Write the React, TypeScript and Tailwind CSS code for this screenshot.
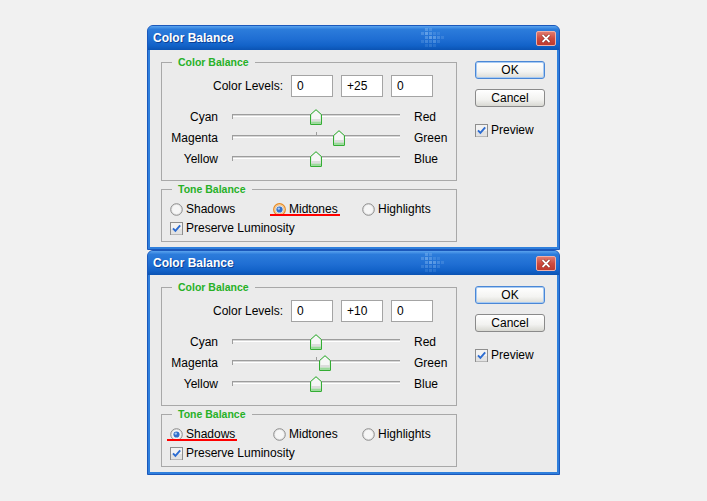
import React from 'react';

type Tone = 'shadows' | 'midtones' | 'highlights';

interface DialogProps {
  levels: [number, number, number];
  tone: Tone;
  hoverTone?: boolean;
}

const sliders = [
  { left: 'Cyan', right: 'Red' },
  { left: 'Magenta', right: 'Green' },
  { left: 'Yellow', right: 'Blue' },
];

const tones: { id: Tone; label: string; width: string }[] = [
  { id: 'shadows', label: 'Shadows', width: 'w-[103px]' },
  { id: 'midtones', label: 'Midtones', width: 'w-[89px]' },
  { id: 'highlights', label: 'Highlights', width: 'w-[90px]' },
];

const fmt = (v: number) => (v > 0 ? `+${v}` : `${v}`);

function Thumb() {
  return (
    <svg width="12" height="16" viewBox="0 0 12 16">
      <path d="M6 0.7 L11.4 5.6 V15.4 H0.6 V5.6 Z" fill="#f6f6f6" stroke="#1ea51e" />
      <rect x="1.1" y="10" width="9.8" height="2.6" fill="#dcdcdc" />
      <rect x="1.1" y="12.6" width="9.8" height="2.3" fill="#9ad99a" />
    </svg>
  );
}

function Radio({ checked, hover }: { checked: boolean; hover?: boolean }) {
  return (
    <svg width="13" height="13" viewBox="0 0 13 13">
      <circle cx="6.5" cy="6.5" r="5.8" fill="#e6e6e6" stroke={hover ? '#ea8a1f' : '#8e8e8e'} strokeWidth={hover ? 1.3 : 1} />
      {hover && <circle cx="6.5" cy="6.5" r="4.6" fill="none" stroke="#f7bd74" strokeWidth="1" />}
      {!hover && <circle cx="6.5" cy="6.5" r="4.4" fill="#f6f6f6" />}
      {checked && (
        <>
          <circle cx="6.5" cy="6.5" r="3.1" fill="#3270cc" />
          <circle cx="5.8" cy="5.6" r="1.2" fill="#a9c9f2" />
        </>
      )}
    </svg>
  );
}

function Check() {
  return (
    <svg width="13" height="13" viewBox="0 0 13 13">
      <rect x="0.5" y="0.5" width="12" height="12" fill="#f2f2f2" stroke="#8e8e8e" />
      <rect x="1" y="7" width="11" height="5.5" fill="#e2e2e2" />
      <path d="M3 6.3 L5.4 8.8 L10.2 3.4" fill="none" stroke="#2b6bd1" strokeWidth="1.9" />
    </svg>
  );
}

function Pattern() {
  const cells: [number, number, number][] = [
    [4, 0, 0.35], [8, 0, 0.25],
    [0, 4, 0.3], [4, 4, 0.5], [8, 4, 0.35], [12, 4, 0.2], [16, 4, 0.15],
    [4, 8, 0.35], [8, 8, 0.5], [12, 8, 0.45], [16, 8, 0.3], [20, 8, 0.2],
    [0, 12, 0.2], [4, 12, 0.3], [8, 12, 0.25], [12, 12, 0.35], [16, 12, 0.2],
    [4, 16, 0.15], [8, 16, 0.2], [12, 16, 0.15],
  ];
  return (
    <svg width="24" height="19" viewBox="0 0 24 19" className="absolute left-[273px] top-[2px]">
      {cells.map(([x, y, o], i) => (
        <rect key={i} x={x} y={y} width="3" height="3" fill="#9cc8f5" opacity={o} />
      ))}
    </svg>
  );
}

function Dialog({ levels, tone, hoverTone }: DialogProps) {
  return (
    <div className="w-[413px] h-[225px] flex flex-col rounded-t-[6px] border border-[#1b58bb] bg-[#2f7fdc]">
      <div className="relative h-[24px] flex items-center pl-[5px] pr-[3px] rounded-t-[5px] bg-[linear-gradient(180deg,#5aa3ee_0%,#2c7cdb_14%,#1f6ed3_55%,#1262c8_82%,#0b53b3_100%)]">
        <span className="text-white font-bold text-[12px] [text-shadow:1px_1px_0_#0b3f94]">Color Balance</span>
        <Pattern />
        <div className="ml-auto w-[20px] h-[15px] flex items-center justify-center rounded-[2px] border border-[#f0b0a8] bg-[linear-gradient(180deg,#e07a6e_0%,#cf4b3f_50%,#bd3a30_100%)]">
          <svg width="10" height="9" viewBox="0 0 10 9">
            <path d="M1.5 1 L8.5 8 M8.5 1 L1.5 8" stroke="#7a1c14" strokeWidth="3" />
            <path d="M1.5 1 L8.5 8 M8.5 1 L1.5 8" stroke="#ffffff" strokeWidth="1.8" />
          </svg>
        </div>
      </div>

      <div className="flex-1 mx-[2px] mb-[2px] bg-[#ebebeb] flex pl-[11px] pt-[12px] text-[12px] text-black">
        <div className="flex flex-col gap-[8px]">
          {/* Color Balance group */}
          <div className="relative w-[296px] h-[119px] border border-[#a8a8a8]">
            <span className="absolute left-[10px] -top-[7px] px-[6px] bg-[#ebebeb] leading-[12px] text-[10.5px] font-bold text-[#27b127]">Color Balance</span>
            <div className="flex items-center pt-[12px]">
              <span className="w-[121px] text-right">Color Levels:</span>
              <div className="flex gap-[8px] ml-[8px]">
                {levels.map((v, i) => (
                  <div key={i} className="w-[42px] h-[22px] border border-[#a4a4a4] bg-white pl-[5px] flex items-center">{fmt(v)}</div>
                ))}
              </div>
            </div>
            <div className="flex flex-col mt-[9px]">
              {sliders.map((s, i) => (
                <div key={s.left} className="h-[21px] flex items-center">
                  <span className="w-[56px] text-right">{s.left}</span>
                  <div className="relative ml-[14px] w-[168px] h-full">
                    <div className="absolute left-0 right-0 top-[8px] h-[3px] border-t border-[#9d9d9d] bg-[#d6d6d6] border-b border-b-white" />
                    <div className="absolute left-0 top-[8px] w-px h-[5px] bg-[#9d9d9d]" />
                    <div className="absolute left-[84px] top-[5px] w-px h-[4px] bg-[#9d9d9d]" />
                    <div className="absolute top-[3px]" style={{ left: 78 + levels[i] * 0.9 }}>
                      <Thumb />
                    </div>
                  </div>
                  <span className="ml-[14px]">{s.right}</span>
                </div>
              ))}
            </div>
          </div>

          {/* Tone Balance group */}
          <div className="relative w-[296px] h-[53px] border border-[#a8a8a8]">
            <span className="absolute left-[10px] -top-[7px] px-[6px] bg-[#ebebeb] leading-[12px] text-[10.5px] font-bold text-[#27b127]">Tone Balance</span>
            <div className="flex items-center h-[16px] mt-[11px] pl-[8px]">
              {tones.map((t) => (
                <div key={t.id} className={`relative flex items-center gap-[3px] ${t.width}`}>
                  <Radio checked={tone === t.id} hover={hoverTone && tone === t.id} />
                  <span>{t.label}</span>
                  {tone === t.id && <div className="absolute -left-[3px] top-[14px] w-[70px] h-[2px] bg-[#ff0000]" />}
                </div>
              ))}
            </div>
            <div className="flex items-center gap-[3px] h-[16px] mt-[3px] pl-[8px]">
              <Check />
              <span>Preserve Luminosity</span>
            </div>
          </div>
        </div>

        <div className="flex flex-col ml-[18px] -mt-[1px]">
          <button className="w-[70px] h-[18px] rounded-[3px] border border-[#4a87d6] shadow-[inset_0_0_0_1px_#a8cbf3] bg-[linear-gradient(180deg,#ffffff_0%,#f4f4f2_60%,#dcdcd6_100%)] text-[12px] leading-none">OK</button>
          <button className="mt-[10px] w-[70px] h-[18px] rounded-[3px] border border-[#8a8a8a] bg-[linear-gradient(180deg,#ffffff_0%,#f2f2f0_60%,#d8d8d2_100%)] text-[12px] leading-none">Cancel</button>
          <div className="mt-[15px] flex items-center gap-[3px] h-[16px]">
            <Check />
            <span>Preview</span>
          </div>
        </div>
      </div>
    </div>
  );
}

export default function App() {
  return (
    <div className="w-[707px] h-[501px] bg-[#f1f1f1] pt-[25px] pl-[147px] font-['Liberation_Sans',Arial,sans-serif]">
      <Dialog levels={[0, 25, 0]} tone="midtones" hoverTone />
      <Dialog levels={[0, 10, 0]} tone="shadows" />
    </div>
  );
}
